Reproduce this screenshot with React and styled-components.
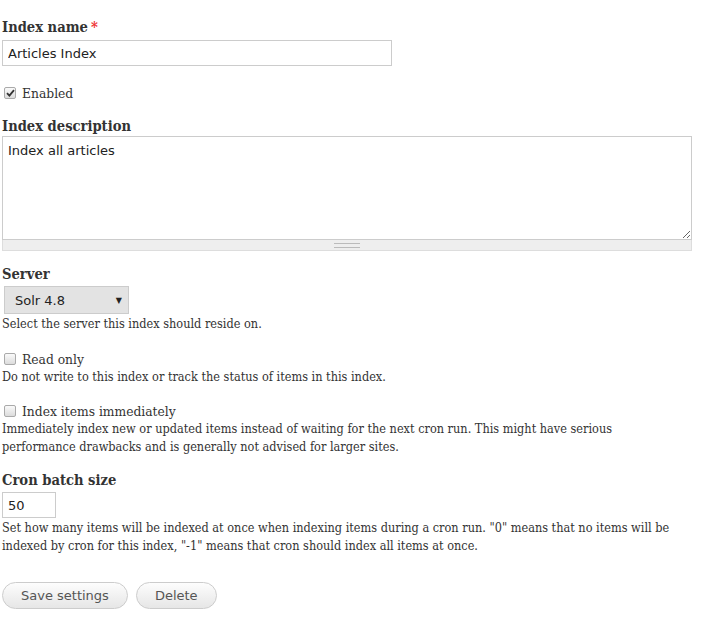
import React from 'react'
import styled, { createGlobalStyle } from 'styled-components'

const Global = createGlobalStyle`
  body {
    margin: 0;
    background: #fff;
    color: #333;
    font-family: "DejaVu Serif Condensed", "DejaVu Serif", serif;
    font-size: 12.6px;
  }
`

const Form = styled.form`
  padding: 18px 2px 0 2px;
  width: 690px;
`

const Item = styled.div`
  margin-top: ${(p) => p.top || 0}px;
`

const Label = styled.label`
  display: block;
  font-weight: bold;
  font-size: 14.6px;
  line-height: 18px;
  color: #333;
  margin-bottom: ${(p) => p.gap ?? 4}px;
`

const Req = styled.span`
  color: #e33;
  margin-left: 3px;
`

const TextInput = styled.input`
  box-sizing: border-box;
  display: block;
  width: ${(p) => p.w}px;
  height: 26px;
  border: 1px solid #ccc;
  padding: 0 5px;
  font-family: "DejaVu Sans", sans-serif;
  font-size: 13px;
  color: #222;
  outline: none;
`

const TextArea = styled.textarea`
  box-sizing: border-box;
  display: block;
  width: 690px;
  height: 104px;
  margin: 0;
  border: 1px solid #ccc;
  padding: 6px 5px;
  font-family: "DejaVu Sans", sans-serif;
  font-size: 13px;
  color: #222;
  resize: vertical;
  outline: none;
`

const Grippie = styled.div`
  box-sizing: border-box;
  height: 11px;
  background: #eee;
  border: 1px solid #ddd;
  border-top: 0;
  display: flex;
  align-items: center;
  justify-content: center;
`

const GripLines = styled.span`
  width: 26px;
  height: 3px;
  border-top: 1px solid #bbb;
  border-bottom: 1px solid #bbb;
`

const Select = styled.div`
  box-sizing: border-box;
  width: 125px;
  height: 28px;
  margin-left: 2px;
  background: #e3e3e3;
  border: 1px solid #ccc;
  display: flex;
  align-items: center;
  justify-content: space-between;
  padding: 0 6px 0 10px;
  font-family: "DejaVu Sans", sans-serif;
  font-size: 13px;
  color: #222;
`

const Arrow = styled.span`
  font-size: 8px;
  color: #222;
`

const Desc = styled.div`
  line-height: 18px;
  color: #333;
  margin-top: ${(p) => p.top || 0}px;
`

const CheckRow = styled.label`
  display: flex;
  align-items: center;
  gap: 6px;
  line-height: 18px;
  font-size: 13.7px;
  color: #333;
`

const Box = styled.span`
  box-sizing: border-box;
  width: 12px;
  height: 12px;
  margin-left: 2px;
  border: 1px solid #aaa;
  border-radius: 2px;
  background: linear-gradient(#fafafa, #dcdcdc);
  display: flex;
  align-items: center;
  justify-content: center;
`

const Actions = styled.div`
  display: flex;
  gap: 8px;
  margin-top: 27px;
`

const Button = styled.button`
  height: 27px;
  padding: 0 18px;
  border: 1px solid #ccc;
  border-radius: 14px;
  background: linear-gradient(#fdfdfd, #e6e6e6);
  font-family: "DejaVu Sans", sans-serif;
  font-size: 13px;
  color: #555;
  cursor: pointer;
`

const Check = ({ checked, children }) => (
  <CheckRow>
    <Box>
      {checked && (
        <svg width="9" height="8" viewBox="0 0 9 8">
          <path d="M1 4.2 L3.4 6.6 L8 1.2" fill="none" stroke="#333" strokeWidth="1.8" />
        </svg>
      )}
    </Box>
    {children}
  </CheckRow>
)

const App = () => (
  <>
    <Global />
    <Form>
      <Item>
        <Label>
          Index name<Req>*</Req>
        </Label>
        <TextInput w={390} defaultValue="Articles Index" />
      </Item>

      <Item top={18}>
        <Check checked>Enabled</Check>
      </Item>

      <Item top={15}>
        <Label gap={1}>Index description</Label>
        <TextArea defaultValue="Index all articles" />
        <Grippie>
          <GripLines />
        </Grippie>
      </Item>

      <Item top={14}>
        <Label gap={3}>Server</Label>
        <Select>
          Solr 4.8
          <Arrow>▼</Arrow>
        </Select>
        <Desc top={1}>Select the server this index should reside on.</Desc>
      </Item>

      <Item top={17}>
        <Check>Read only</Check>
        <Desc>Do not write to this index or track the status of items in this index.</Desc>
      </Item>

      <Item top={16}>
        <Check>Index items immediately</Check>
        <Desc>
          Immediately index new or updated items instead of waiting for the next cron run. This might have serious
          <br />
          performance drawbacks and is generally not advised for larger sites.
        </Desc>
      </Item>

      <Item top={15}>
        <Label gap={3}>Cron batch size</Label>
        <TextInput w={54} defaultValue="50" />
        <Desc top={1}>
          Set how many items will be indexed at once when indexing items during a cron run. "0" means that no items will be
          <br />
          indexed by cron for this index, "-1" means that cron should index all items at once.
        </Desc>
      </Item>

      <Actions>
        <Button type="button">Save settings</Button>
        <Button type="button">Delete</Button>
      </Actions>
    </Form>
  </>
)

export default App
